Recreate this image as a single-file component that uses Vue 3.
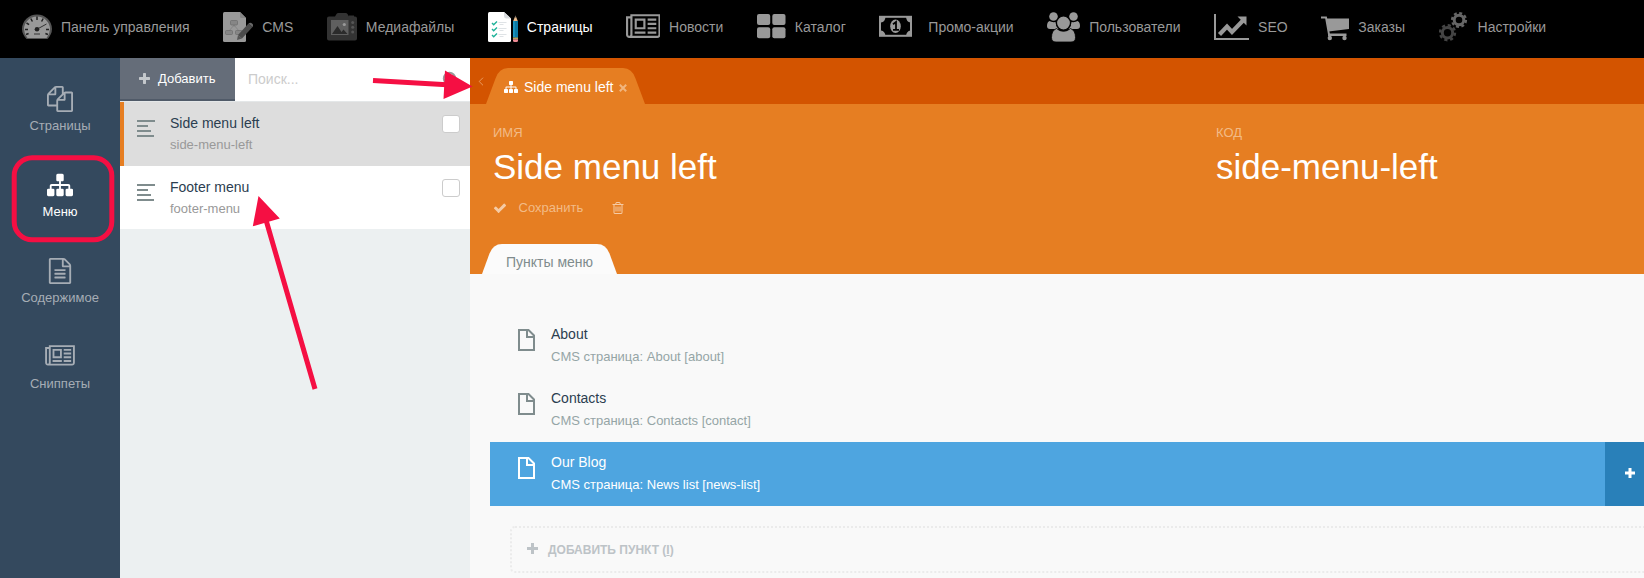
<script setup>
const icons = {
  sitemap: {
    box: '0 0 1792 1792',
    d: 'M1792 1248v320q0 40-28 68t-68 28h-320q-40 0-68-28t-28-68v-320q0-40 28-68t68-28h96v-192h-512v192h96q40 0 68 28t28 68v320q0 40-28 68t-68 28h-320q-40 0-68-28t-28-68v-320q0-40 28-68t68-28h96v-192h-512v192h96q40 0 68 28t28 68v320q0 40-28 68t-68 28h-320q-40 0-68-28t-28-68v-320q0-40 28-68t68-28h96v-192q0-52 38-90t90-38h512v-192h-96q-40 0-68-28t-28-68v-320q0-40 28-68t68-28h320q40 0 68 28t28 68v320q0 40-28 68t-68 28h-96v192h512q52 0 90 38t38 90v192h96q40 0 68 28t28 68z',
  },
  files: {
    box: '0 0 1792 1792',
    d: 'M1696 384q40 0 68 28t28 68v1216q0 40-28 68t-68 28h-960q-40 0-68-28t-28-68v-288h-544q-40 0-68-28t-28-68v-672q0-40 20-88t48-76l408-408q28-28 76-48t88-20h416q40 0 68 28t28 68v328q68-40 128-40h416zm-544 213l-299 299h299v-299zm-640-384l-299 299h299v-299zm196 647l316-316v-416h-384v416q0 40-28 68t-68 28h-416v640h512v-256q0-40 20-88t48-76zm956 804v-1152h-384v416q0 40-28 68t-68 28h-416v640h896z',
  },
  fileText: {
    box: '0 0 1792 1792',
    d: 'M1596 380q28 28 48 76t20 88v1152q0 40-28 68t-68 28h-1344q-40 0-68-28t-28-68v-1600q0-40 28-68t68-28h896q40 0 88 20t76 48zm-444-244v376h376q-10-29-22-41l-313-313q-12-12-41-22zm384 1528v-1024h-416q-40 0-68-28t-28-68v-416h-768v1536h1280zm-1024-864q0-14 9-23t23-9h704q14 0 23 9t9 23v64q0 14-9 23t-23 9h-704q-14 0-23-9t-9-23v-64zm736 224q14 0 23 9t9 23v64q0 14-9 23t-23 9h-704q-14 0-23-9t-9-23v-64q0-14 9-23t23-9h704zm0 256q14 0 23 9t9 23v64q0 14-9 23t-23 9h-704q-14 0-23-9t-9-23v-64q0-14 9-23t23-9h704z',
  },
  newspaper: {
    box: '0 48 2048 1792',
    d: 'M1024 512h-384v384h384v-384zm128 640v128h-640v-128h640zm0-768v640h-640v-640h640zm640 768v128h-512v-128h512zm0-256v128h-512v-128h512zm0-256v128h-512v-128h512zm0-256v128h-512v-128h512zm-1536 960v-960h-128v960q0 26 19 45t45 19 45-19 19-45zm1664 0v-1088h-1536v1088q0 33-11 64h1483q26 0 45-19t19-45zm128-1216v1216q0 80-56 136t-136 56h-1664q-80 0-136-56t-56-136v-1088h256v-128h1792z',
  },
  plus: 'M1600 736v192q0 40-28 68t-68 28h-416v416q0 40-28 68t-68 28h-192q-40 0-68-28t-28-68v-416h-416q-40 0-68-28t-28-68v-192q0-40 28-68t68-28h416v-416q0-40 28-68t68-28h192q40 0 68 28t28 68v416h416q40 0 68 28t28 68z',
  check: 'M1671 566q0 40-28 68l-724 724-136 136q-28 28-68 28t-68-28l-136-136-362-362q-28-28-28-68t28-68l136-136q28-28 68-28t68 28l294 295 656-657q28-28 68-28t68 28l136 136q28 28 28 68z',
  trash: 'M704 736v576q0 14-9 23t-23 9h-64q-14 0-23-9t-9-23v-576q0-14 9-23t23-9h64q14 0 23 9t9 23zm256 0v576q0 14-9 23t-23 9h-64q-14 0-23-9t-9-23v-576q0-14 9-23t23-9h64q14 0 23 9t9 23zm256 0v576q0 14-9 23t-23 9h-64q-14 0-23-9t-9-23v-576q0-14 9-23t23-9h64q14 0 23 9t9 23zm128 724v-948h-896v948q0 22 7 40.5t14.5 27 10.5 8.5h832q3 0 10.5-8.5t14.5-27 7-40.5zm-672-1076h448l-48-117q-7-9-17-11h-317q-10 2-17 11zm928 32v64q0 14-9 23t-23 9h-96v948q0 83-47 143.5t-113 60.5h-832q-66 0-113-58.5t-47-141.5v-952h-96q-14 0-23-9t-9-23v-64q0-14 9-23t23-9h309l70-167q15-37 54-63t79-26h320q40 0 79 26t54 63l70 167h309q14 0 23 9t9 23z',
}

const sections = [
  { label: 'Страницы', icon: icons.files },
  { label: 'Меню', icon: icons.sitemap, active: true },
  { label: 'Содержимое', icon: icons.fileText },
  { label: 'Сниппеты', icon: icons.newspaper, wide: true },
]

const menus = [
  { title: 'Side menu left', code: 'side-menu-left', active: true },
  { title: 'Footer menu', code: 'footer-menu' },
]

const items = [
  { title: 'About', note: 'CMS страница: About [about]' },
  { title: 'Contacts', note: 'CMS страница: Contacts [contact]' },
  { title: 'Our Blog', note: 'CMS страница: News list [news-list]', hover: true },
]
</script>

<template>
  <div class="app">
    <nav class="topnav">
      <a class="nav-item">
        <svg class="ico" viewBox="0 0 30 58" width="30" height="58">
          <path d="M4.5 39Q0 34 0 29A15 14.6 0 0 1 30 29Q30 34 25.500 39Z" fill="#555" />
          <path d="M5.500 38Q2 33.500 2 29A13 12.500 0 0 1 28 29Q28 33.500 24.500 38Z" fill="#999" />
          <path d="M15 16.500v3.500M8.800 18.500l1.600 3M21.200 18.500l-1.600 3M4.500 23l2.600 1.600M3 29.500h3M27 29.500h-3M4 34.500l2.600-1M26 34.500l-2.600-1" stroke="#222" stroke-width="1.500" />
          <path d="M14.500 29.500L24.500 24" stroke="#333" stroke-width="1" />
          <circle cx="15" cy="29.300" r="2.300" fill="#222" />
          <path d="M12 34h6" stroke="#555" stroke-width="1.500" />
        </svg>
        <span>Панель управления</span>
      </a>
      <a class="nav-item">
        <svg class="ico" viewBox="0 0 30 58" width="30" height="58">
          <path d="M1.500 12H17l6 6v22.500q0 1.500-1.500 1.500h-20Q0 42 0 40.500v-27Q0 12 1.500 12z" fill="#999" />
          <path d="M17 12l6 6h-4.500Q17 18 17 16.500z" fill="#858585" />
          <path d="M11 24v3M11 25l-5 6M11 25l5 6" stroke="#858585" fill="none" />
          <g fill="#868686" stroke="#6c6c6c" stroke-width=".7">
            <rect x="7.500" y="20.500" width="7" height="4.500" rx="1" />
            <rect x="2.500" y="30.500" width="7" height="4" rx="1" />
            <rect x="12.500" y="30.500" width="7" height="4" rx="1" />
          </g>
          <path d="M15 35L25.500 23.500l4 3.500L19 38.500z" fill="#4b4b4b" />
          <path d="M25.500 23.500q2-1.500 3.800.2t.2 3.300z" fill="#686868" />
          <path d="M15 35l4 3.500-5 1.500z" fill="#555" />
        </svg>
        <span>CMS</span>
      </a>
      <a class="nav-item">
        <svg class="ico" viewBox="0 0 30 58" width="30" height="58">
          <path d="M2 16.500h6l1.500-2.500q.5-1 2-1h7q1.500 0 2 1l1.500 2.500V15.500h5v1h1q2 0 2 2V38.500q0 2-2 2H2q-2 0-2-2V18.500q0-2 2-2z" fill="#333" />
          <rect x="4" y="20" width="17.500" height="15" fill="#5f5f5f" />
          <path d="M5 34l5.500-8 4 6 2-2.500 4 4.500z" fill="#2b2b2b" />
          <circle cx="17.300" cy="24.500" r="1.600" fill="#999" />
          <g fill="#555">
            <circle cx="25.700" cy="22.500" r="1.500" />
            <circle cx="25.700" cy="27.200" r="1.500" />
            <circle cx="25.700" cy="31.900" r="1.500" />
          </g>
        </svg>
        <span>Медиафайлы</span>
      </a>
      <a class="nav-item active">
        <svg class="ico" viewBox="0 0 30 58" width="30" height="58">
          <path d="M1.500 12H16l7 6.500v22q0 1.500-1.500 1.500h-20Q0 42 0 40.500v-27Q0 12 1.500 12z" fill="#fff" />
          <path d="M16 12l7 6.500h-5Q16 18 16 16z" fill="#d9dcdf" />
          <path d="M4 23l1.700 1.700L9 21.500M4 29l1.700 1.700L9 27.500M4 35l1.700 1.700L9 33.500" stroke="#1fb299" stroke-width="1.400" fill="none" />
          <path d="M10.500 22.500h8M11.500 24.500h4M10.500 28.500h8M11.500 30.500h4M10.500 34.500h8M11.500 36.500h4" stroke="#dfe3e6" />
          <path d="M27.500 15.500l2.500 6h-5z" fill="#e8b98a" />
          <path d="M27.500 15.500l.8 2h-1.600z" fill="#555" />
          <rect x="25" y="21" width="5" height="16.500" fill="#1d96c0" />
          <rect x="26.800" y="21" width="3.200" height="16.500" fill="#0d7ba6" />
          <rect x="25" y="37.500" width="5" height="1.700" fill="#b9a15a" />
          <path d="M25 39.200h5v1.300q0 1.500-1.500 1.500h-2Q25 42 25 40.500z" fill="#ef8a94" />
        </svg>
        <span>Страницы</span>
      </a>
      <a class="nav-item">
        <svg class="ico" viewBox="0 0 34 58" width="34" height="58">
          <g transform="translate(0 12) scale(.01690)"><path :d="icons.newspaper.d" fill="#999" /></g>
        </svg>
        <span>Новости</span>
      </a>
      <a class="nav-item">
        <svg class="ico" viewBox="0 0 29 58" width="29" height="58">
          <g fill="#999">
            <rect x="0" y="14" width="13.200" height="11" rx="2" />
            <rect x="15.300" y="14" width="13.200" height="11" rx="2" />
            <rect x="0" y="27.200" width="13.200" height="11" rx="2" />
            <rect x="15.300" y="27.200" width="13.200" height="11" rx="2" />
          </g>
        </svg>
        <span>Каталог</span>
      </a>
      <a class="nav-item">
        <svg class="ico" viewBox="0 0 40 58" width="40" height="58">
          <rect x="1" y="16.800" width="31" height="19" fill="none" stroke="#999" stroke-width="2" />
          <path d="M2 17h4.500Q6 22 2 22.500zM31.500 17h-4.500Q27.500 22 31.500 22.500zM2 36h4.500Q6 31 2 30.500zM31.500 36h-4.500Q27.500 31 31.500 30.500z" fill="#999" />
          <ellipse cx="16.500" cy="26.300" rx="5.300" ry="6.800" fill="#999" />
          <path d="M14 24.300l3-2.300v7.500M14 29.800h6" stroke="#000" stroke-width="1.800" fill="none" />
        </svg>
        <span>Промо-акции</span>
      </a>
      <a class="nav-item">
        <svg class="ico" viewBox="0 0 33 58" width="33" height="58">
          <g fill="#999">
            <circle cx="6.500" cy="16.500" r="4.300" />
            <circle cx="26.500" cy="16.500" r="4.300" />
            <path d="M2.500 21q2 1.500 6 1 0 4 3 7H3q-3 0-3-3 0-4 2.500-5zM30.500 21q-2 1.500-6 1 0 4-3 7H30q3 0 3-3 0-4-2.500-5z" />
            <path d="M9.500 28.500q3 2.800 7 2.800t7-2.800q5 2 5 9 0 4.500-4.500 4.500H9q-4.500 0-4.500-4.500 0-7 5-9z" stroke="#000" stroke-width=".8" />
            <circle cx="16.500" cy="23" r="7" stroke="#000" stroke-width="1.200" />
          </g>
        </svg>
        <span>Пользователи</span>
      </a>
      <a class="nav-item">
        <svg class="ico" viewBox="0 0 35 58" width="35" height="58">
          <path d="M1 14v25h34" stroke="#999" stroke-width="2" fill="none" />
          <path d="M5.500 34.500l7.500-8 5 5.500L29.500 20" stroke="#999" stroke-width="4.200" fill="none" />
          <path d="M23.500 16.500h9v9z" fill="#999" />
        </svg>
        <span>SEO</span>
      </a>
      <a class="nav-item">
        <svg class="ico" viewBox="0 0 28 58" width="28" height="58">
          <path d="M0 17.500h5l3 17" stroke="#999" stroke-width="1.900" fill="none" />
          <path d="M5.500 18.500H28v10.500L7.500 31.500z" fill="#999" />
          <circle cx="8.800" cy="38" r="2.200" fill="#999" />
          <circle cx="23.500" cy="38" r="2.200" fill="#999" />
          <path d="M7 33.500h18.500v2.500H7z" fill="#999" />
        </svg>
        <span>Заказы</span>
      </a>
      <a class="nav-item">
        <svg class="ico" viewBox="0 0 30 58" width="30" height="58">
          <g fill="none">
            <circle cx="8.500" cy="32.700" r="5.200" stroke="#444" stroke-width="3" />
            <circle cx="8.500" cy="32.700" r="7.500" stroke="#444" stroke-width="2.400" stroke-dasharray="3.200 2.690" />
            <circle cx="20" cy="20" r="4.800" stroke="#666" stroke-width="3" />
            <circle cx="20" cy="20" r="7" stroke="#666" stroke-width="2.200" stroke-dasharray="3 2.500" />
          </g>
        </svg>
        <span>Настройки</span>
      </a>
    </nav>

    <div class="body">
      <aside class="sidebar">
        <a v-for="s in sections" :key="s.label" class="side-item" :class="{ active: s.active }">
          <svg :viewBox="s.icon.box" :width="s.wide ? 30 : 26" height="26"><path :d="s.icon.d" /></svg>
          <span>{{ s.label }}</span>
        </a>
      </aside>

      <section class="list">
        <div class="toolbar">
          <button class="add">
            <svg viewBox="0 0 1408 1408" width="11" height="11"><path transform="translate(-192 -128)" :d="icons.plus" /></svg>
            <span>Добавить</span>
          </button>
          <div class="search">
            <span>Поиск...</span>
            <svg viewBox="0 0 16 16" width="16" height="16"><circle cx="7.500" cy="7.500" r="5.700" /><path d="M11.500 11.500L15 15" /></svg>
          </div>
        </div>
        <div v-for="m in menus" :key="m.code" class="menu-row" :class="{ active: m.active }">
          <svg viewBox="0 0 18 17" width="18" height="17"><path d="M0 0h18v2H0zM0 5h11v2H0zM0 10h14v2H0zM0 15h17v2H0z" /></svg>
          <div class="menu-text">
            <h5>{{ m.title }}</h5>
            <p>{{ m.code }}</p>
          </div>
          <i class="checkbox"></i>
        </div>
      </section>

      <main class="main">
        <div class="tabstrip">
          <svg class="collapse" viewBox="0 0 6 9" width="6" height="9"><path d="M5 .7L1.200 4.500 5 8.300" /></svg>
          <div class="tab">
            <svg class="tab-shape" viewBox="0 0 159 36" width="159" height="36"><path d="M0 36L9.500 10.500Q13 0 22 0H137Q146 0 149.500 10.500L159 36z" /></svg>
            <svg class="tab-icon" viewBox="0 0 1792 1792" width="14" height="14"><path :d="icons.sitemap.d" /></svg>
            <span>Side menu left</span>
            <svg class="close" viewBox="0 0 8 8" width="8" height="8"><path d="M.8 .8l6.400 6.400M7.200 .8L.8 7.200" /></svg>
          </div>
        </div>

        <div class="header">
          <div class="fields">
            <div class="field"><label>ИМЯ</label><strong>Side menu left</strong></div>
            <div class="field"><label>КОД</label><strong>side-menu-left</strong></div>
          </div>
          <div class="actions">
            <svg viewBox="0 0 1792 1792" width="14" height="14"><path :d="icons.check" /></svg>
            <span>Сохранить</span>
            <svg viewBox="0 0 1792 1792" width="14" height="14"><path :d="icons.trash" /></svg>
          </div>
          <div class="form-tab">
            <svg class="tab-shape" viewBox="0 0 135 30" width="135" height="30"><path d="M0 30L7.500 9.500Q11 0 20 0H115Q124 0 127.500 9.500L135 30z" /></svg>
            <span>Пункты меню</span>
          </div>
        </div>

        <div class="tree">
          <div v-for="i in items" :key="i.title" class="tree-row" :class="{ hover: i.hover }">
            <svg viewBox="0 0 17 22" width="17" height="22"><path d="M1 1h9.500L16 6.500V21H1zM9 1v7h7" /></svg>
            <div class="tree-text">
              <h5>{{ i.title }}</h5>
              <p>{{ i.note }}</p>
            </div>
            <button v-if="i.hover" class="row-add">
              <svg viewBox="0 0 10 10" width="10" height="10"><path d="M0 5h10M5 0v10" /></svg>
            </button>
          </div>
          <div class="add-item">
            <svg viewBox="0 0 11 11" width="11" height="11"><path d="M0 5.500h11M5.500 0v11" /></svg>
            <span>ДОБАВИТЬ ПУНКТ (<u>I</u>)</span>
          </div>
        </div>
      </main>
    </div>

    <svg class="marks" viewBox="0 0 1644 578" width="1644" height="578">
      <rect x="14.200" y="157.700" width="97.600" height="82" rx="18" />
      <path d="M373 80.500L447 84.700M315 389L266 220" />
      <path class="head" d="M445 70.500L472.500 86.500 443.500 99zM258.500 196L279.800 218.500 252.800 226.300z" />
    </svg>
  </div>
</template>

<style>
body {
  margin: 0;
}
</style>

<style scoped>
.app {
  position: relative;
  width: 1644px;
  height: 578px;
  overflow: hidden;
  display: flex;
  flex-direction: column;
  font: 14px/20px "Liberation Sans", Arial, sans-serif;
}
svg {
  display: block;
  flex: none;
}
h5,
p {
  margin: 0;
  font-weight: normal;
}
h5 {
  font-size: 14px;
}
button {
  border: 0;
  padding: 0;
  font: inherit;
}
.topnav {
  flex: none;
  height: 58px;
  background: #000;
  display: flex;
  gap: 33.55px;
  padding-left: 22px;
}
.nav-item {
  display: flex;
  align-items: center;
  gap: 9px;
  color: #999;
  white-space: nowrap;
}
.nav-item span {
  margin-top: -4px;
}
.nav-item.active {
  color: #fff;
}
.body {
  flex: 1;
  display: flex;
  min-height: 0;
}
.sidebar {
  flex: none;
  width: 120px;
  background: #34495e;
  padding-top: 28px;
}
.side-item {
  height: 86px;
  display: flex;
  flex-direction: column;
  align-items: center;
  gap: 5px;
  font-size: 13px;
  line-height: 18px;
  color: #a6adb5;
  fill: #a6adb5;
}
.side-item.active {
  color: #fff;
  fill: #fff;
}
.list {
  flex: none;
  width: 350px;
  background: #ecf0f1;
}
.toolbar {
  display: flex;
  height: 43px;
  background: #fff;
  border-bottom: 1px solid #e4e7e8;
}
.add {
  width: 115px;
  box-sizing: border-box;
  background: #656d79;
  border-bottom: 2px solid #505a68;
  color: #fff;
  font-size: 13px;
  display: flex;
  align-items: center;
  padding-left: 19px;
  gap: 8px;
}
.add svg {
  fill: #c4c8cc;
  margin-top: -1px;
}
.search {
  flex: 1;
  display: flex;
  align-items: center;
  justify-content: space-between;
  padding: 0 12px 2px 13px;
  color: #ccc;
}
.search svg {
  fill: none;
  stroke: #999;
  stroke-width: 2;
}
.menu-row {
  height: 64px;
  box-sizing: border-box;
  display: flex;
  align-items: flex-start;
  background: #fff;
  padding: 11px 10px 0 17px;
}
.menu-row:last-child {
  height: 63px;
}
.menu-row.active {
  background: #ddd;
  border-left: 4px solid #e67e22;
  padding-left: 13px;
}
.menu-row svg {
  margin-top: 7px;
  fill: #7f8c8d;
}
.menu-text {
  flex: 1;
  margin-left: 15px;
  color: #2b3e50;
}
.menu-text p {
  margin-top: 2px;
  font-size: 13px;
  color: #999;
}
.checkbox {
  width: 16px;
  height: 16px;
  margin-top: 2px;
  border: 1px solid #ccc;
  border-radius: 3px;
  background: #fff;
}
.main {
  flex: 1;
  min-width: 0;
  background: #f9f9f9;
}
.tabstrip {
  height: 46px;
  box-sizing: border-box;
  background: #d35400;
  display: flex;
  padding: 10px 0 0 8px;
}
.collapse {
  margin: 9px 2px 0 0;
  fill: none;
  stroke: #ea9a5e;
}
.tab {
  position: relative;
  width: 159px;
  box-sizing: border-box;
  display: flex;
  align-items: center;
  padding: 2px 0 0 18px;
  color: #fff;
}
.tab > * {
  position: relative;
}
.tab > .tab-shape,
.form-tab > .tab-shape {
  position: absolute;
  left: 0;
  top: 0;
}
.tab-shape {
  fill: #e67e22;
}
.tab-icon {
  fill: #fff;
  margin-right: 6px;
}
.close {
  margin: 2px 0 0 5px;
  fill: none;
  stroke: #f1b67f;
  stroke-width: 2;
}
.header {
  height: 170px;
  box-sizing: border-box;
  background: #e67e22;
  padding: 20px 0 0 23px;
}
.fields {
  display: flex;
}
.field {
  width: 723px;
  flex: none;
}
.field label {
  display: block;
  font-size: 13px;
  line-height: 18px;
  color: #f2bb87;
}
.field strong {
  display: block;
  font-weight: normal;
  font-size: 35px;
  line-height: 40px;
  margin-top: 5px;
  color: #fff;
}
.actions {
  display: flex;
  align-items: center;
  height: 20px;
  margin-top: 11px;
  font-size: 13px;
  color: #f2bb87;
  fill: #f5cba5;
}
.actions span {
  margin: 0 28px 0 11.6px;
}
.form-tab {
  position: relative;
  width: 135px;
  height: 30px;
  margin: 26px 0 0 -11px;
  display: flex;
  justify-content: center;
  align-items: center;
  color: #7f8c8d;
}
.form-tab .tab-shape {
  fill: #fbfbfb;
}
.form-tab span {
  position: relative;
  top: 3px;
}
.tree {
  padding: 40px 0 0 20px;
}
.tree-row {
  height: 64px;
  display: flex;
  align-items: flex-start;
  padding-left: 28px;
}
.tree-row > svg {
  margin-top: 15px;
  fill: none;
  stroke: #7f8c8d;
  stroke-width: 2;
}
.tree-text {
  flex: 1;
  margin: 10px 0 0 16px;
  color: #2b3e50;
}
.tree-text p {
  margin-top: 3px;
  font-size: 13px;
  color: #95a5a6;
}
.hover {
  background: #4ea5e0;
}
.hover h5,
.hover p {
  color: #fff;
}
.hover > svg {
  stroke: #fff;
}
.row-add {
  align-self: stretch;
  width: 39px;
  background: #2980b9;
  padding: 0 0 3px 20px;
}
.row-add svg {
  stroke: #fff;
  stroke-width: 3;
}
.add-item {
  height: 43px;
  margin: 20px -10px 0 20px;
  border: 2px dotted #ebebeb;
  border-radius: 5px;
  display: flex;
  align-items: center;
  gap: 10px;
  padding-left: 15px;
  font-size: 12px;
  font-weight: bold;
  color: #bdc3c7;
}
.add-item svg {
  stroke: #bdc3c7;
  stroke-width: 3;
  margin-top: -2px;
}
.marks {
  position: absolute;
  left: 0;
  top: 0;
  fill: none;
  stroke: #f50f43;
  stroke-width: 5;
  pointer-events: none;
}
.marks .head {
  fill: #f50f43;
  stroke: none;
}
</style>
